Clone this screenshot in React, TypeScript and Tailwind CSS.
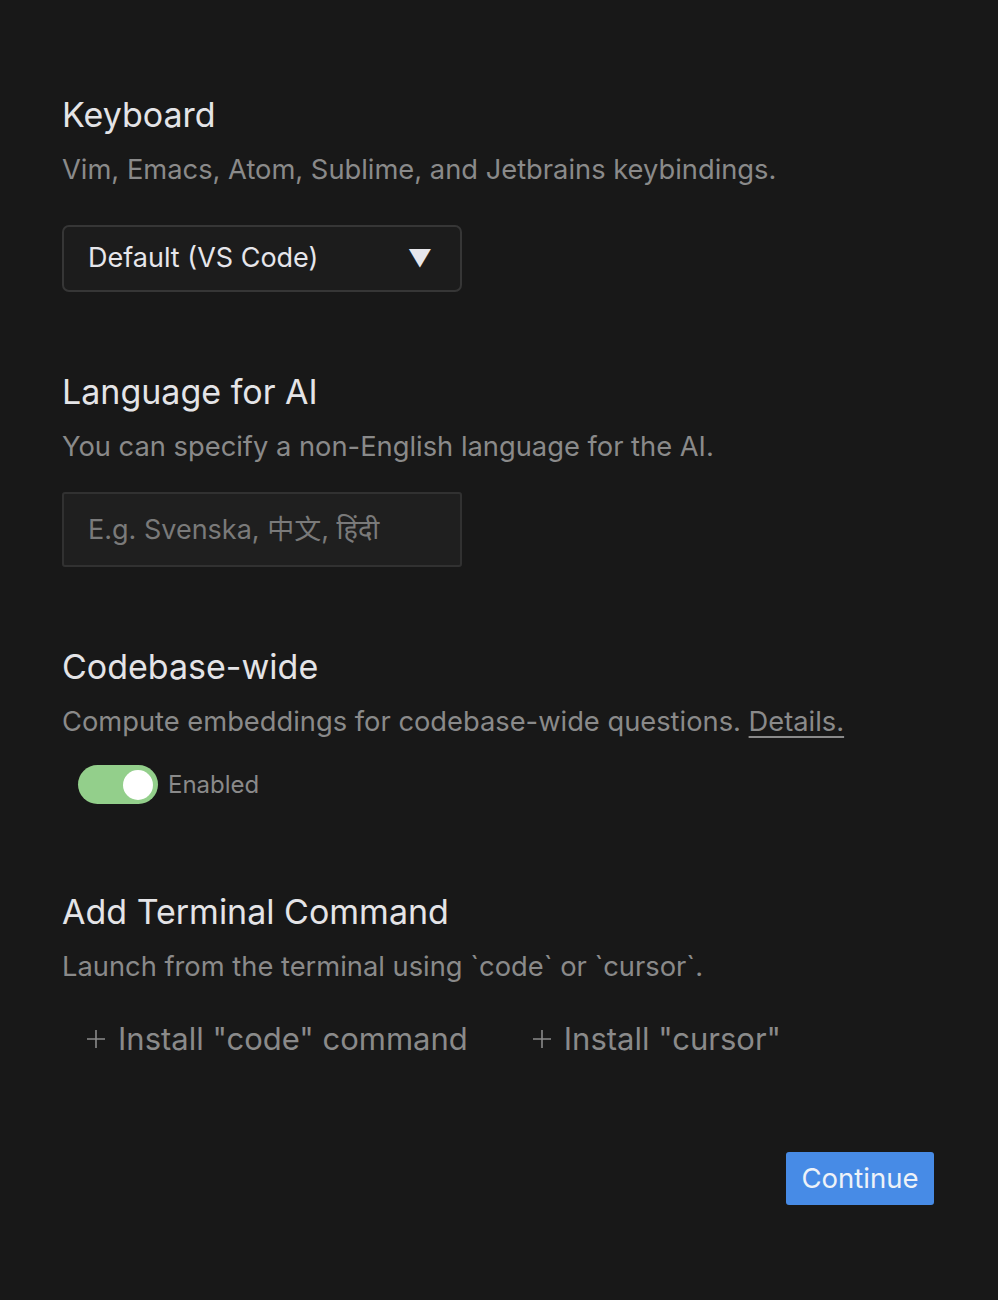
import React, { useState } from "react";

const font = { fontFamily: 'Inter, "Noto Sans", "Noto Sans CJK SC", sans-serif' };

const Section = ({ title, desc, children }: { title: string; desc: React.ReactNode; children: React.ReactNode }) => (
  <div className="flex flex-col">
    <h2 className="text-[34px] leading-[40px] text-[#e4e4e7]">{title}</h2>
    <p className="mt-[17px] text-[27.3px] leading-[36px] text-[#8a8a8a]">{desc}</p>
    {children}
  </div>
);

const Plus = () => (
  <svg width="20" height="20" viewBox="0 0 20 20" fill="none" stroke="currentColor" strokeWidth="1.6">
    <path d="M10 1v18M1 10h18" />
  </svg>
);

export default function App() {
  const [enabled, setEnabled] = useState(true);
  const [lang, setLang] = useState("");

  return (
    <div className="w-[998px] h-[1300px] bg-[#181818] flex flex-col px-[62px] pt-[95px]" style={font}>
      <div className="flex flex-col gap-[80px]">
        <Section title="Keyboard" desc="Vim, Emacs, Atom, Sublime, and Jetbrains keybindings.">
          <button className="mt-[37px] w-[400px] h-[67px] rounded-[7px] border-2 border-[#363636] bg-[#1c1c1c] flex items-center justify-between pl-[24px] pr-[28px] text-[27px] text-[#e6e6eb]">
            <span>Default (VS Code)</span>
            <span className="text-[24px]">▼</span>
          </button>
        </Section>

        <Section title="Language for AI" desc="You can specify a non-English language for the AI.">
          <input
            value={lang}
            onChange={(e) => setLang(e.target.value)}
            placeholder="E.g. Svenska, 中文, हिंदी"
            className="mt-[27px] w-[400px] h-[75px] rounded-[3px] border-2 border-[#313131] bg-[#1f1f1f] px-[24px] text-[27px] text-[#e6e6eb] placeholder:text-[#7a7a7a] outline-none"
          />
        </Section>

        <Section
          title="Codebase-wide"
          desc={
            <>
              Compute embeddings for codebase-wide questions.{" "}
              <span className="underline underline-offset-[5px] decoration-2">Details.</span>
            </>
          }
        >
          <div className="mt-[25px] mb-[8px] flex items-center gap-[10px] pl-[16px]">
            <button
              onClick={() => setEnabled(!enabled)}
              className={`w-[80px] h-[39px] rounded-full flex items-center px-[5px] ${enabled ? "bg-[#93cf8b] justify-end" : "bg-[#444] justify-start"}`}
            >
              <span className="w-[30px] h-[30px] rounded-full bg-white" />
            </button>
            <span className="text-[24px] text-[#8a8a8a]">Enabled</span>
          </div>
        </Section>

        <Section title="Add Terminal Command" desc="Launch from the terminal using `code` or `cursor`.">
          <div className="mt-[34px] flex items-center gap-[64px] pl-[24px] text-[31px] leading-[40px] text-[#8a8a8a]">
            <button className="flex items-center gap-[12px]">
              <Plus />
              <span>Install "code" command</span>
            </button>
            <button className="flex items-center gap-[12px]">
              <Plus />
              <span>Install "cursor"</span>
            </button>
          </div>
        </Section>
      </div>

      <div className="flex justify-end mt-[93px] pr-[2px]">
        <button className="w-[148px] h-[53px] rounded-[3px] bg-[#478be6] text-[27.5px] text-[#eef2f8]">Continue</button>
      </div>
    </div>
  );
}
